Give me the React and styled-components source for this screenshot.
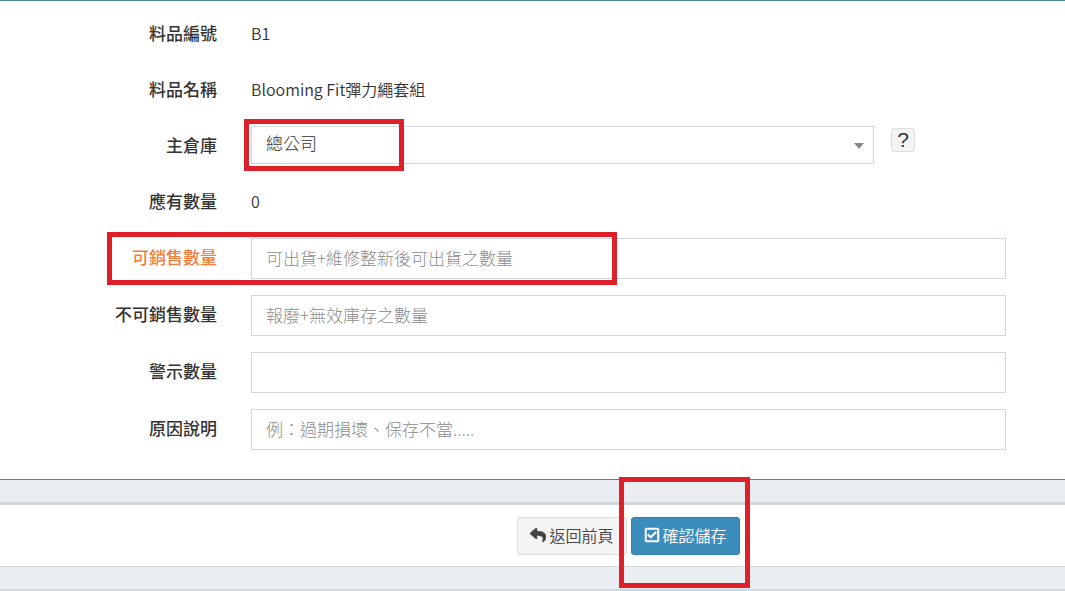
import { useState } from "react";
// Styling
import styled, { createGlobalStyle } from "styled-components";

// Icons
import { FaReply, FaRegCheckSquare } from "react-icons/fa";

const App = () => {
  const [warehouse, setWarehouse] = useState("總公司");

  return (
    <Page>
      <GlobalStyle />
      <form onSubmit={e => e.preventDefault()}>
        <Panel>
          <Row>
            <Name>料品編號</Name>
            <Value>B1</Value>
          </Row>
          <Row>
            <Name>料品名稱</Name>
            <Value>Blooming Fit彈力繩套組</Value>
          </Row>
          <Row>
            <Label htmlFor="warehouse">主倉庫</Label>
            <SelectField>
              <SelectBox>
                <Select
                  id="warehouse"
                  value={warehouse}
                  onChange={e => setWarehouse(e.target.value)}
                >
                  <option>總公司</option>
                </Select>
                <Arrow viewBox="0 0 10 6" aria-hidden="true">
                  <path d="M0 0h10L5 6z" />
                </Arrow>
                <WarehouseMark />
              </SelectBox>
              <Help type="button">?</Help>
            </SelectField>
          </Row>
          <Row>
            <Name>應有數量</Name>
            <Value>0</Value>
          </Row>
          <Row>
            <Label htmlFor="sellable" $accent>
              可銷售數量
            </Label>
            <Input id="sellable" placeholder="可出貨+維修整新後可出貨之數量" />
            <SellableMark />
          </Row>
          <Row>
            <Label htmlFor="unsellable">不可銷售數量</Label>
            <Input id="unsellable" placeholder="報廢+無效庫存之數量" />
          </Row>
          <Row>
            <Label htmlFor="alert">警示數量</Label>
            <Input id="alert" />
          </Row>
          <Row>
            <Label htmlFor="reason">原因說明</Label>
            <Input id="reason" placeholder="例：過期損壞、保存不當....." />
          </Row>
        </Panel>
        <Footer>
          <Button type="button">
            <FaReply />
            返回前頁
          </Button>
          <SaveBox>
            <Button type="submit" $primary>
              <FaRegCheckSquare />
              確認儲存
            </Button>
            <SaveMark />
          </SaveBox>
        </Footer>
      </form>
      <NextPanel />
    </Page>
  );
};

const GlobalStyle = createGlobalStyle`
  * {
    box-sizing: border-box;
  }

  body {
    background: #eaeef3;
    margin: 0;
  }

  body, button, input, select {
    color: #333;
    font-family: "Noto Sans CJK TC", "Noto Sans", sans-serif;
    font-size: 17px;
    font-weight: 300;
  }
`;

const Page = styled.main`
  min-height: 100vh;
  overflow: hidden;
`;

const Panel = styled.section`
  background: #fff;
  border-bottom: 1px solid #4f8799;
  border-top: 1px solid #4f8799;
  display: flex;
  flex-direction: column;
  gap: 16px;
  padding: 13px 59px 29px 0;
`;

const Row = styled.div`
  align-items: center;
  column-gap: 34px;
  display: grid;
  grid-template-columns: 217px 1fr;
  min-height: 40px;
  position: relative;
`;

const Label = styled.label`
  color: ${({ $accent }) => ($accent ? "#f08040" : "#333")};
  font-weight: 500;
  line-height: 24px;
  padding-bottom: 3px;
  text-align: right;
`;

const Name = styled(Label).attrs({ as: "span" })``;

const Value = styled.span`
  font-size: 16px;
  font-weight: 350;
  line-height: 24px;
  padding-bottom: 3px;
`;

const Input = styled.input`
  background: #fff;
  border: 1px solid #d2d6de;
  border-radius: 0;
  height: 41px;
  min-width: 0;
  padding: 0 14px 3px;
  width: 100%;

  &::placeholder {
    color: #8c8c8c;
    opacity: 1;
  }
`;

const SelectField = styled.div`
  align-items: start;
  column-gap: 17px;
  display: grid;
  grid-template-columns: 1fr 115px;
  height: 40px;
`;

const SelectBox = styled.div`
  position: relative;
`;

const Select = styled.select`
  appearance: none;
  background: #fff;
  border: 1px solid #d2d6de;
  border-radius: 0;
  height: 38px;
  padding: 0 32px 5px 14px;
  width: 100%;
`;

const Arrow = styled.svg`
  fill: #888;
  height: 6px;
  pointer-events: none;
  position: absolute;
  right: 10px;
  top: 17px;
  width: 10px;
`;

const Help = styled.button`
  background: #f4f4f4;
  border: 1px solid #ddd;
  border-radius: 3px;
  font-family: "Liberation Sans", sans-serif;
  font-size: 21px;
  height: 24px;
  line-height: 20px;
  margin-top: 2px;
  padding: 0;
  width: 24px;
`;

const Footer = styled.footer`
  background: #fff;
  border-bottom: 1px solid #d2d6de;
  border-top: 3px solid #d2d6de;
  display: flex;
  gap: 4px;
  justify-content: center;
  margin-top: 22px;
  padding: 12px 59px 11px 251px;
`;

const Button = styled.button`
  align-items: center;
  background: ${({ $primary }) => ($primary ? "#3c8dbc" : "#f4f4f4")};
  border: 1px solid ${({ $primary }) => ($primary ? "#367fa9" : "#ddd")};
  border-radius: 3px;
  color: ${({ $primary }) => ($primary ? "#fff" : "#444")};
  display: flex;
  font-size: 16px;
  font-weight: 350;
  gap: 3px;
  height: 38px;
  padding: 0 12px 3px;
  white-space: nowrap;

  svg {
    stroke-width: 16px;
  }
`;

const SaveBox = styled.div`
  position: relative;
`;

const Mark = styled.div`
  border: 5px solid #df202a;
  pointer-events: none;
  position: absolute;
`;

const WarehouseMark = styled(Mark)`
  height: 52px;
  left: -7px;
  top: -7px;
  width: 160px;
`;

const SellableMark = styled(Mark)`
  height: 53px;
  left: 107px;
  top: -6px;
  width: 510px;
`;

const SaveMark = styled(Mark)`
  bottom: -33px;
  left: -12px;
  right: -10px;
  top: -40px;
`;

const NextPanel = styled.div`
  background: #fff;
  border-top: 3px solid #d2d6de;
  margin-top: 22px;
`;

export default App;
